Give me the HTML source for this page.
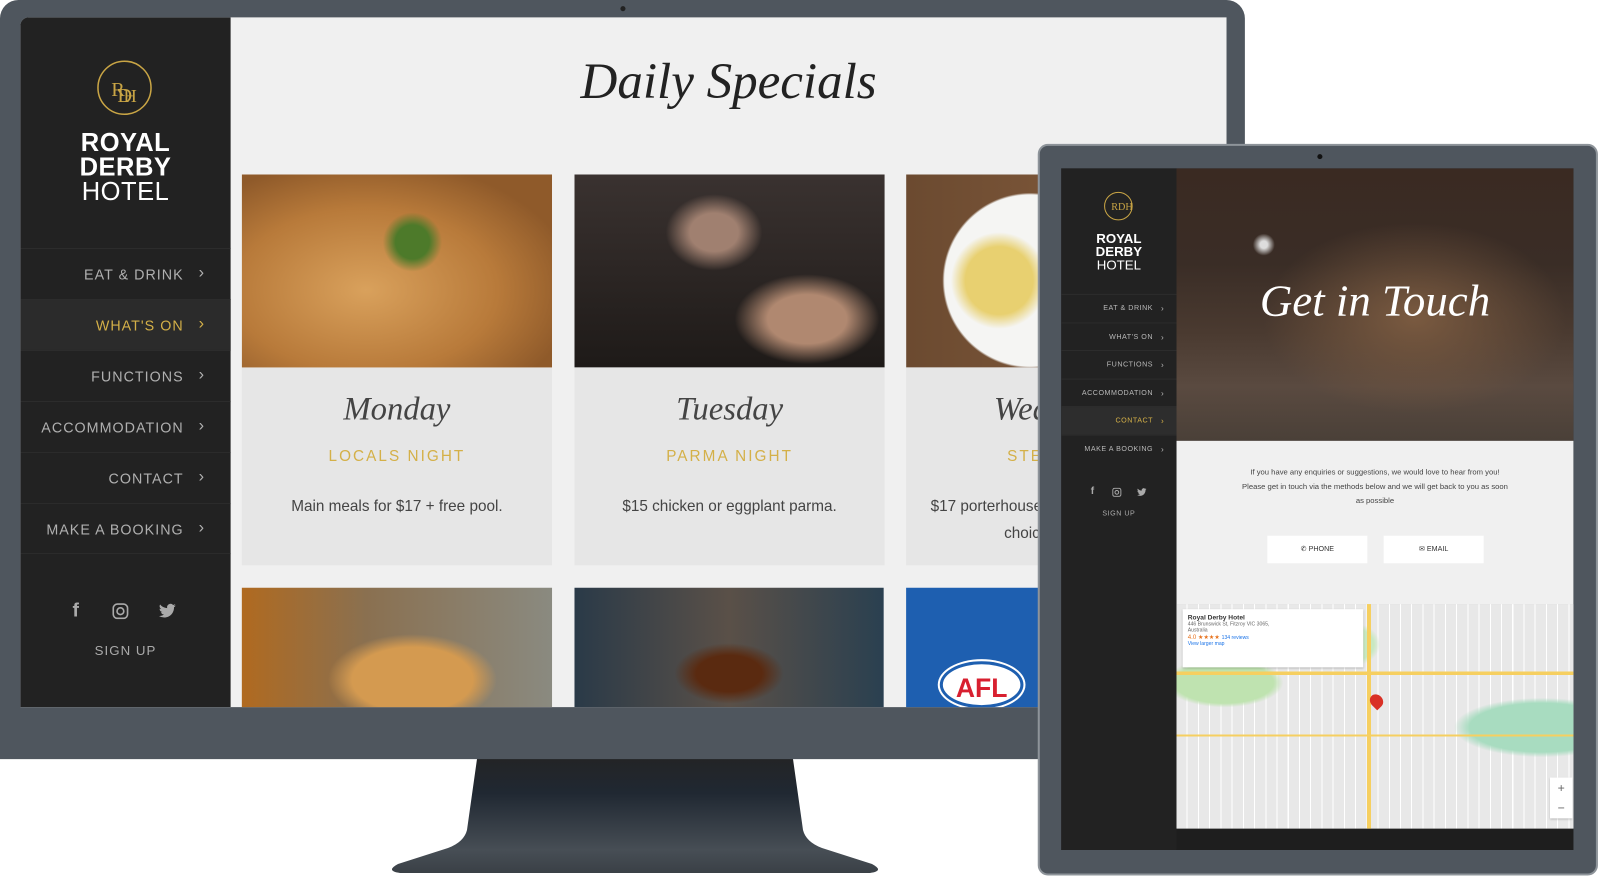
<!DOCTYPE html>
<html><head><meta charset="utf-8"><style>
*{margin:0;padding:0;box-sizing:border-box}
body{width:1600px;height:876px;background:#fff;position:relative;overflow:hidden;font-family:"Liberation Sans",sans-serif}
#wrap{position:absolute;left:0;top:0;width:1568px;height:858px;transform:scale(1.0204);transform-origin:0 0}
.abs{position:absolute}
.mon{left:0;top:0;width:1220px;height:744px;background:#4f565e;border-radius:18px 18px 0 0}
.scr{left:20px;top:17px;width:1182px;height:676px;background:#f0f0f0;overflow:hidden;border-radius:8px 0 0 0}
.side{left:0;top:0;width:206px;height:676px;background:#222}
.nav{position:absolute;left:0;width:206px;height:50px;border-top:1px solid #2c2c2c;color:#b0b0b0;font-size:14px;letter-spacing:1px;text-align:right;padding-right:46px;line-height:50px}
.nav:after{content:"›";position:absolute;right:25px;top:-1px;font-size:16px}
.nav.act{background:#2b2b2b;color:#d4b048}
.card{position:absolute;top:154px;width:304px;height:383px;background:#e6e6e6;overflow:hidden}
.card .img{height:189px}
.card h3{font-family:"Liberation Serif",serif;font-style:italic;font-weight:normal;font-size:32px;color:#444;text-align:center;margin-top:22px}
.card h4{font-weight:normal;color:#d4b048;font-size:15px;letter-spacing:2px;text-align:center;margin-top:20px}
.card p{color:#444;font-size:15px;text-align:center;margin-top:28px;line-height:26px}
.tab{left:1017px;top:141px;width:549px;height:717px;background:#4f565e;border:2px solid #8e949a;border-radius:10px}
.tscr{left:1040px;top:165px;width:502px;height:668px;background:#1e1e1e;overflow:hidden}
.tnav{position:absolute;left:0;width:113px;height:27.5px;border-top:1px solid #2c2c2c;color:#b8b8b8;font-size:7px;letter-spacing:.5px;text-align:right;padding-right:23px;line-height:27px}
.tnav:after{content:"›";position:absolute;right:12px;top:0;font-size:8px}
.tnav.act{background:#2d2d2d;color:#d4b048}
</style></head><body>
<svg class="abs" style="left:0;top:0" width="1600" height="876">
<defs><linearGradient id="sg" x1="0" y1="759" x2="0" y2="873" gradientUnits="userSpaceOnUse"><stop offset="0" stop-color="#232426"/><stop offset=".3" stop-color="#202832"/><stop offset=".8" stop-color="#474e55"/><stop offset="1" stop-color="#3a4046"/></linearGradient></defs>
<path d="M477 759 L793 759 L803 830 Q806 842 822 848 L872 864 Q885 871 870 873 L400 873 Q385 871 398 864 L448 848 Q464 842 467 830 Z" fill="url(#sg)"/>
</svg>
<div id="wrap">
<div class="abs mon"></div>
<div class="abs" style="left:608px;top:6px;width:5px;height:5px;border-radius:50%;background:#222"></div>
<div class="abs scr">
  <div class="abs side">
    <svg class="abs" style="left:74px;top:41px" width="56" height="56"><circle cx="28" cy="28" r="26" fill="none" stroke="#c9a545" stroke-width="1.5"/><text x="15" y="36" font-family="Liberation Serif" font-size="20" fill="#c9a545">R</text><text x="21" y="42" font-family="Liberation Serif" font-size="20" fill="#c9a545">D</text><text x="27" y="42" font-family="Liberation Serif" font-size="18" fill="#c9a545">H</text></svg>
    <div class="abs" style="left:0;width:206px;top:111px;text-align:center;color:#fff;font-size:25px;line-height:24px;font-weight:bold;letter-spacing:.5px">ROYAL<br>DERBY<br><span style="font-weight:normal">HOTEL</span></div>
    <div class="nav" style="top:226px">EAT &amp; DRINK</div>
    <div class="nav act" style="top:276px">WHAT'S ON</div>
    <div class="nav" style="top:326px">FUNCTIONS</div>
    <div class="nav" style="top:376px">ACCOMMODATION</div>
    <div class="nav" style="top:426px">CONTACT</div>
    <div class="nav" style="top:476px;border-bottom:1px solid #2c2c2c">MAKE A BOOKING</div>
    <div class="abs" style="left:51px;top:571px;color:#aaa;font-size:19px;font-weight:bold">f</div>
    <svg class="abs" style="left:90px;top:574px" width="16" height="16"><rect x="1" y="1" width="14" height="14" rx="4" fill="none" stroke="#aaa" stroke-width="1.6"/><circle cx="8" cy="8" r="3.3" fill="none" stroke="#aaa" stroke-width="1.6"/></svg>
    <svg class="abs" style="left:135px;top:574px" width="18" height="16" viewBox="0 0 24 20"><path d="M23 2.5c-.8.4-1.7.6-2.6.7.9-.6 1.6-1.4 2-2.5-.9.5-1.9.9-2.9 1.1A4.5 4.5 0 0 0 11.8 5.9 12.8 12.8 0 0 1 2.5 1.2a4.5 4.5 0 0 0 1.4 6 4.4 4.4 0 0 1-2-.6 4.5 4.5 0 0 0 3.6 4.5 4.5 4.5 0 0 1-2 .1 4.5 4.5 0 0 0 4.2 3.1A9 9 0 0 1 1 16.2 12.8 12.8 0 0 0 7.9 18.2c8.3 0 12.8-6.9 12.8-12.8v-.6c.9-.6 1.7-1.4 2.3-2.3z" fill="#aaa"/></svg>
    <div class="abs" style="left:0;width:206px;top:613px;text-align:center;color:#aaa;font-size:13px;letter-spacing:1px">SIGN UP</div>
  </div>
  <div class="abs" style="left:206px;width:976px;top:33px;text-align:center;font-family:'Liberation Serif',serif;font-style:italic;font-size:50px;color:#222">Daily Specials</div>
  <div class="card" style="left:217px"><div class="img" style="background:radial-gradient(circle at 55% 35%,#4d7a2a 0 8%,transparent 14%),radial-gradient(ellipse at 40% 60%,#d9a15c,#b87a3a 50%,#8f5a2a 80%),#c89050"></div><h3>Monday</h3><h4>LOCALS NIGHT</h4><p>Main meals for $17 + free pool.</p></div>
  <div class="card" style="left:543px"><div class="img" style="background:radial-gradient(ellipse at 45% 30%,#a08070 0 10%,transparent 20%),radial-gradient(ellipse at 75% 75%,#b08870 0 12%,transparent 22%),linear-gradient(#3a3230,#1e1a18)"></div><h3>Tuesday</h3><h4>PARMA NIGHT</h4><p>$15 chicken or eggplant parma.</p></div>
  <div class="card" style="left:868px"><div class="img" style="background:radial-gradient(circle at 30% 55%,#e8d070 0 14%,transparent 20%),radial-gradient(circle at 40% 55%,#f5f5f3 0 40%,transparent 41%),linear-gradient(90deg,#6b4a30,#8a6040)"></div><h3 style="text-align:left;padding-left:86px">Wednesday</h3><h4 style="text-align:left;padding-left:99px">STEAK NIGHT</h4><p style="text-align:left;padding-left:24px">$17 porterhouse with<br><span style="padding-left:72px">choice</span></p></div>
  <div class="abs" style="left:217px;top:559px;width:304px;height:120px;background:radial-gradient(ellipse at 55% 75%,#d49a50 0 25%,transparent 35%),linear-gradient(90deg,#b06a20,#8a7050 40%,#8a8a80)"></div>
  <div class="abs" style="left:543px;top:559px;width:303px;height:120px;background:radial-gradient(ellipse at 50% 70%,#5a2a10 0 15%,transparent 25%),linear-gradient(90deg,#2a3a48,#5a5048 50%,#2a4050)"></div>
  <div class="abs" style="left:868px;top:559px;width:150px;height:120px;background:#1e5fb0"><div style="position:absolute;left:33px;top:72px;width:82px;height:46px;border-radius:50%;background:#fff;border:3px solid #1e5fb0;box-shadow:0 0 0 2px #fff;color:#d82030;font-weight:bold;font-size:26px;text-align:center;line-height:46px">AFL</div></div>
</div>
<div class="abs tab"></div>
<div class="abs" style="left:1291px;top:151px;width:5px;height:5px;border-radius:50%;background:#111"></div>
<div class="abs tscr">
  <div class="abs" style="left:0;top:0;width:113px;height:668px;background:#222"></div>
  <svg class="abs" style="left:41px;top:22px" width="30" height="30"><circle cx="15" cy="15" r="13.5" fill="none" stroke="#c9a545" stroke-width="1"/><text x="8" y="19" font-family="Liberation Serif" font-size="10" fill="#c9a545">RDH</text></svg>
  <div class="abs" style="left:0;width:113px;top:62px;text-align:center;color:#fff;font-size:13px;line-height:13px;font-weight:bold">ROYAL<br>DERBY<br><span style="font-weight:normal">HOTEL</span></div>
  <div class="tnav" style="top:123px">EAT &amp; DRINK</div>
  <div class="tnav" style="top:150.5px">WHAT'S ON</div>
  <div class="tnav" style="top:178px">FUNCTIONS</div>
  <div class="tnav" style="top:205.5px">ACCOMMODATION</div>
  <div class="tnav act" style="top:233px">CONTACT</div>
  <div class="tnav" style="top:260.5px">MAKE A BOOKING</div>
  <div class="abs" style="left:29px;top:311px;color:#aaa;font-size:10px;font-weight:bold">f</div>
  <svg class="abs" style="left:50px;top:313px" width="9" height="9"><rect x=".5" y=".5" width="8" height="8" rx="2" fill="none" stroke="#aaa"/><circle cx="4.5" cy="4.5" r="1.8" fill="none" stroke="#aaa"/></svg>
  <svg class="abs" style="left:74px;top:313px" width="10" height="9" viewBox="0 0 24 20"><path d="M23 2.5c-.8.4-1.7.6-2.6.7.9-.6 1.6-1.4 2-2.5-.9.5-1.9.9-2.9 1.1A4.5 4.5 0 0 0 11.8 5.9 12.8 12.8 0 0 1 2.5 1.2a4.5 4.5 0 0 0 1.4 6 4.4 4.4 0 0 1-2-.6 4.5 4.5 0 0 0 3.6 4.5 4.5 4.5 0 0 1-2 .1 4.5 4.5 0 0 0 4.2 3.1A9 9 0 0 1 1 16.2 12.8 12.8 0 0 0 7.9 18.2c8.3 0 12.8-6.9 12.8-12.8v-.6c.9-.6 1.7-1.4 2.3-2.3z" fill="#aaa"/></svg>
  <div class="abs" style="left:0;width:113px;top:335px;text-align:center;color:#aaa;font-size:7px;letter-spacing:.5px">SIGN UP</div>
  <div class="abs" style="left:113px;top:0;width:389px;height:267px;background:radial-gradient(ellipse at 60% 55%,#7a5a40 0,transparent 45%),radial-gradient(circle at 22% 28%,#ddd 0 1%,transparent 3%),linear-gradient(#3a2a22 0,#3a2d26 35%,#4a3a30 60%,#5a4a40 80%,#4a4038)"></div>
  <div class="abs" style="left:113px;width:389px;top:104px;text-align:center;font-family:'Liberation Serif',serif;font-style:italic;font-size:44px;color:#fff">Get in Touch</div>
  <div class="abs" style="left:113px;top:267px;width:389px;height:160px;background:#f0f0f0"></div>
  <div class="abs" style="left:113px;width:389px;top:291px;text-align:center;font-size:7.5px;color:#444;line-height:14px">If you have any enquiries or suggestions, we would love to hear from you!<br>Please get in touch via the methods below and we will get back to you as soon<br>as possible</div>
  <div class="abs" style="left:202px;top:360px;width:98px;height:27px;background:#fff;font-size:7px;text-align:center;line-height:27px;color:#333">✆ PHONE</div>
  <div class="abs" style="left:316px;top:360px;width:98px;height:27px;background:#fff;font-size:7px;text-align:center;line-height:27px;color:#333">✉ EMAIL</div>
  <div class="abs" style="left:113px;top:427px;width:389px;height:220px;background:
   linear-gradient(90deg,transparent 48%,#f6cf60 48% 49%,transparent 49%),
   linear-gradient(transparent 30%,#f6cf60 30% 31.5%,transparent 31.5%),
   linear-gradient(transparent 58%,#f6cf60 58% 59%,transparent 59%),
   radial-gradient(ellipse at 12% 35%,#bfe3b0 0 10%,transparent 12%),
   radial-gradient(ellipse at 92% 55%,#a8dcc0 0 14%,transparent 17%),
   radial-gradient(ellipse at 45% 18%,#c8e8c0 0 6%,transparent 8%),
   repeating-linear-gradient(90deg,#e8e8e8 0 10px,#fff 10px 11px),#ececec"></div>
  <div class="abs" style="left:119px;top:432px;width:177px;height:57px;background:#fff;box-shadow:0 1px 2px rgba(0,0,0,.2);font-size:6px;color:#333;padding:5px">
    <b style="font-size:6.5px">Royal Derby Hotel</b><br><span style="font-size:5px;color:#666">446 Brunswick St, Fitzroy VIC 3065,<br>Australia</span><br><span style="color:#e7711b">4.0 ★★★★</span> <span style="color:#1a73e8;font-size:5px">134 reviews</span><br><span style="color:#1a73e8;font-size:5px">View larger map</span>
  </div>
  <div class="abs" style="left:479px;top:597px;width:22px;height:40px;background:#fff;box-shadow:0 1px 2px rgba(0,0,0,.2);font-size:12px;text-align:center;color:#666;line-height:20px">+<br>−</div>
  <div class="abs" style="left:303px;top:515px;width:12px;height:14px;border-radius:50% 50% 50% 0;transform:rotate(-45deg);background:#d93025"></div>
</div>
</div></body></html>
